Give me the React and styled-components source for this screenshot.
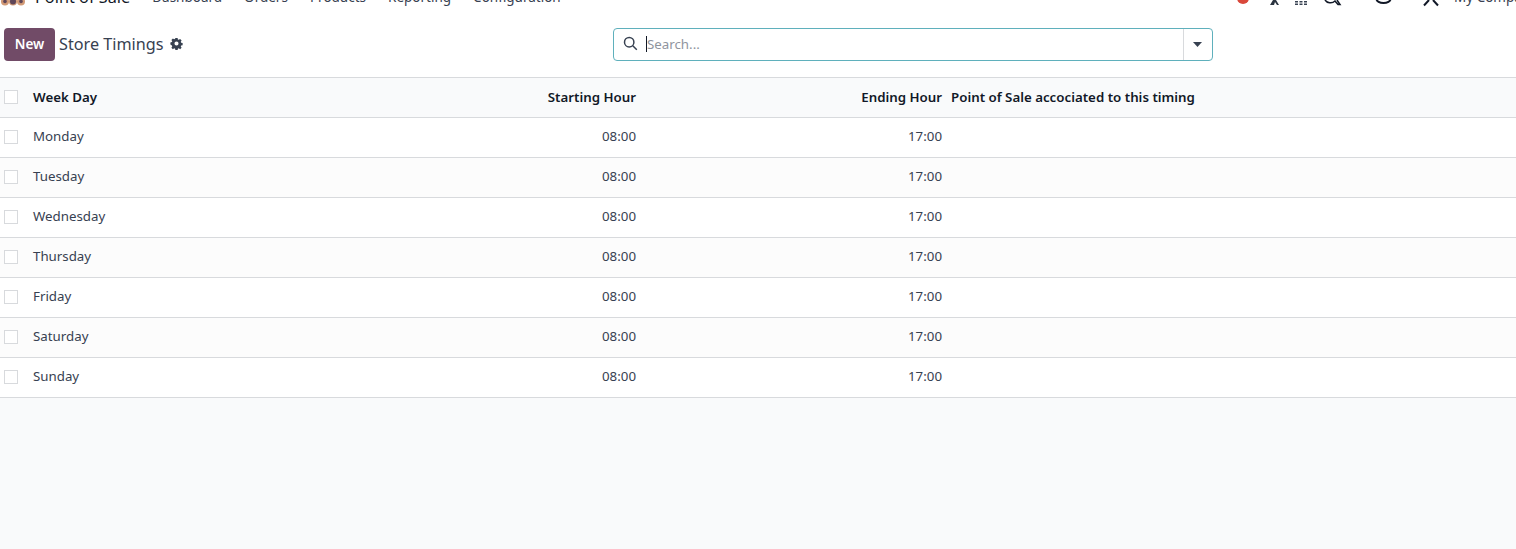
import React from "react";
import styled, { createGlobalStyle } from "styled-components";

const GlobalStyle = createGlobalStyle`
  html, body {
    margin: 0;
    padding: 0;
    height: 100%;
    overflow: hidden;
    background: #f9fafb;
    font-family: "Noto Sans", "Open Sans", sans-serif;
    font-size: 13.3px;
    color: #374151;
  }
`;

const Page = styled.div`
  height: 549px;
  display: flex;
  flex-direction: column;
  overflow: hidden;
`;

// top nav is cut off by the top of the window
const NavBar = styled.header`
  height: 7px;
  background: #fff;
  overflow: hidden;
  display: flex;
  align-items: flex-end;
  justify-content: space-between;
  padding-left: 1px;
  flex-shrink: 0;
`;

const NavLeft = styled.div`
  display: flex;
  align-items: center;
  height: 20px;
  svg {
    align-self: flex-end;
    flex-shrink: 0;
  }
`;

const AppName = styled.span`
  font-size: 16.3px;
  color: #111827;
  margin: 0 22px 0 10px;
  white-space: nowrap;
`;

const NavItem = styled.span`
  font-size: 13.5px;
  color: #374151;
  margin-right: 22px;
  white-space: nowrap;
`;

const NavRight = styled.div`
  width: 279px;
  flex-shrink: 0;
  height: 20px;
  display: flex;
  align-items: center;
  overflow: hidden;
  white-space: nowrap;
  svg {
    align-self: flex-end;
    flex-shrink: 0;
  }
`;

const CompanyName = styled.span`
  font-size: 13.5px;
  color: #374151;
  margin-left: 15px;
`;

const ControlPanel = styled.div`
  height: 71px;
  background: #fff;
  border-bottom: 1px solid #d8dadd;
  display: grid;
  grid-template-columns: 613px 600px 1fr;
  align-items: center;
  flex-shrink: 0;
  padding-top: 5px;
  box-sizing: border-box;
`;

const TitleGroup = styled.div`
  display: flex;
  align-items: center;
  padding-left: 4px;
`;

const NewButton = styled.button`
  width: 51px;
  height: 33px;
  background: #714b67;
  border: 0;
  border-radius: 4px;
  color: #fff;
  font: 600 13.5px "Noto Sans", sans-serif;
  padding: 0 0 2px;
`;

const Title = styled.span`
  font-size: 16.2px;
  color: #374151;
  margin: 0 7px 2px 4px;
`;

const GearWrap = styled.span`
  display: flex;
  margin-bottom: 2px;
`;

const SearchBox = styled.div`
  height: 33px;
  border: 1px solid #5fb0bc;
  border-radius: 4px;
  box-sizing: border-box;
  display: flex;
  align-items: center;
  background: #fff;
`;

const SearchField = styled.div`
  flex: 1;
  display: flex;
  align-items: center;
  padding: 0 0 2px 9px;
  gap: 8px;
  height: 100%;
  box-sizing: border-box;
`;

const Caret = styled.span`
  width: 1px;
  height: 16px;
  background: #111827;
  margin-right: -8px;
`;

const Placeholder = styled.span`
  color: #8f959e;
  font-size: 13.3px;
`;

const DropButton = styled.div`
  width: 28px;
  height: 100%;
  border-left: 1px solid #d8dadd;
  display: flex;
  align-items: center;
  justify-content: center;
`;

const Table = styled.table`
  width: 100%;
  border-collapse: collapse;
  table-layout: fixed;
`;

const HeadRow = styled.tr`
  height: 39px;
  background: #f9fafb;
  border-bottom: 1px solid #d8dadd;
`;

const Row = styled.tr`
  height: 40px;
  background: ${(p) => (p.$odd ? "#fff" : "#fcfcfc")};
  border-bottom: 1px solid #d8dadd;
`;

const Th = styled.th`
  box-sizing: border-box;
  font-weight: 600;
  font-size: 13.3px;
  color: #111827;
  padding: 0 ${(p) => (p.$right ? "4px" : "5px")} 0 5px;
  text-align: ${(p) => (p.$right ? "right" : "left")};
`;

const Td = styled.td`
  box-sizing: border-box;
  font-size: 13.3px;
  color: #374151;
  padding: 0 ${(p) => (p.$right ? "4px" : "5px")} 3px 5px;
  text-align: ${(p) => (p.$right ? "right" : "left")};
`;

const CheckCell = styled.td`
  padding: 0 0 0 4px;
  line-height: 0;
`;

const CheckHead = styled.th`
  padding: 0 0 0 4px;
  line-height: 0;
  text-align: left;
`;

const Check = styled.span`
  display: inline-block;
  width: 12px;
  height: 12px;
  border: 1px solid #d8dadd;
  background: #fff;
`;

const NarrowCol = styled.col`
  width: 28px;
`;

const HourCol = styled.col`
  width: 306px;
`;

const days = ["Monday", "Tuesday", "Wednesday", "Thursday", "Friday", "Saturday", "Sunday"];

function Gear() {
  return (
    <svg width="13" height="13" viewBox="0 0 14 14">
      <path
        fill="#374151"
        fillRule="evenodd"
        d="M5.8 1h2.4l.3 1.6 1 .4 1.4-.9 1.6 1.6-.9 1.4.4 1 1.6.3v2.4l-1.6.3-.4 1 .9 1.4-1.6 1.6-1.4-.9-1 .4-.3 1.6H5.8l-.3-1.6-1-.4-1.4.9-1.6-1.6.9-1.4-.4-1L.4 8.2V5.8L2 5.5l.4-1-.9-1.4 1.6-1.6 1.4.9 1-.4zM7 4.8a2.2 2.2 0 1 0 0 4.4 2.2 2.2 0 0 0 0-4.4z"
      />
    </svg>
  );
}

function SearchIcon() {
  return (
    <svg width="15" height="15" viewBox="0 0 15 15" fill="none" stroke="#374151" strokeWidth="1.5">
      <circle cx="6.2" cy="6.2" r="4.7" />
      <path d="M9.8 9.8l4 4" />
    </svg>
  );
}

function AppLogo() {
  return (
    <svg width="24" height="7" viewBox="0 0 24 7">
      <circle cx="4" cy="1.5" r="4" fill="#d29a76" />
      <circle cx="12" cy="1.5" r="4" fill="#d29a76" />
      <circle cx="20" cy="1.5" r="4" fill="#d29a76" />
      <circle cx="4" cy="1.5" r="1.800" fill="#5f4658" />
      <circle cx="12" cy="1.500" r="3" fill="#5f4658" />
      <circle cx="20" cy="1.500" r="1.800" fill="#5f4658" />
    </svg>
  );
}

// bottoms of the systray icons, only the lower edge is in view
function Systray() {
  return (
    <svg width="202" height="7" viewBox="0 0 202 7">
      <circle cx="6" cy="-2" r="6" fill="#d9483b" />
      <path d="M33 5l3-5h3l3 5h-2l-2-3-1 3z" fill="#2b3440" />
      <path d="M58 1h3v1.500h-3zM62.500 1h3v1.500h-3zM67 1h3v1.500h-3zM58 3.500h3V5h-3zM62.500 3.500h3V5h-3zM67 3.500h3V5h-3z" fill="#374151" />
      <path d="M88 0c2 3 7 4 10 1l3 3.500h2L100 0" fill="none" stroke="#111827" strokeWidth="1.500" />
      <path d="M139.500 -1a7 4 0 0 0 14 0" fill="none" stroke="#111827" strokeWidth="2" />
      <path d="M187 5.500l5-5.500M201 5.500l-5-5.500" fill="none" stroke="#111827" strokeWidth="2" />
    </svg>
  );
}

export default function App() {
  return (
    <Page>
      <GlobalStyle />
      <NavBar>
        <NavLeft>
          <AppLogo />
          <AppName>Point of Sale</AppName>
          <NavItem>Dashboard</NavItem>
          <NavItem>Orders</NavItem>
          <NavItem>Products</NavItem>
          <NavItem>Reporting</NavItem>
          <NavItem>Configuration</NavItem>
        </NavLeft>
        <NavRight>
          <Systray />
          <CompanyName>My Company</CompanyName>
        </NavRight>
      </NavBar>
      <ControlPanel>
        <TitleGroup>
          <NewButton>New</NewButton>
          <Title>Store Timings</Title>
          <GearWrap><Gear /></GearWrap>
        </TitleGroup>
        <SearchBox>
          <SearchField>
            <SearchIcon />
            <Caret />
            <Placeholder>Search...</Placeholder>
          </SearchField>
          <DropButton>
            <svg width="10" height="5" viewBox="0 0 10 5">
              <path d="M0 0h9L4.500 5z" fill="#374151" />
            </svg>
          </DropButton>
        </SearchBox>
      </ControlPanel>
      <Table>
        <colgroup>
          <NarrowCol />
          <HourCol />
          <HourCol />
          <HourCol />
          <col />
        </colgroup>
        <thead>
          <HeadRow>
            <CheckHead><Check /></CheckHead>
            <Th>Week Day</Th>
            <Th $right>Starting Hour</Th>
            <Th $right>Ending Hour</Th>
            <Th>Point of Sale accociated to this timing</Th>
          </HeadRow>
        </thead>
        <tbody>
          {days.map((d, i) => (
            <Row key={d} $odd={i % 2 === 0}>
              <CheckCell><Check /></CheckCell>
              <Td>{d}</Td>
              <Td $right>08:00</Td>
              <Td $right>17:00</Td>
              <Td />
            </Row>
          ))}
        </tbody>
      </Table>
    </Page>
  );
}
